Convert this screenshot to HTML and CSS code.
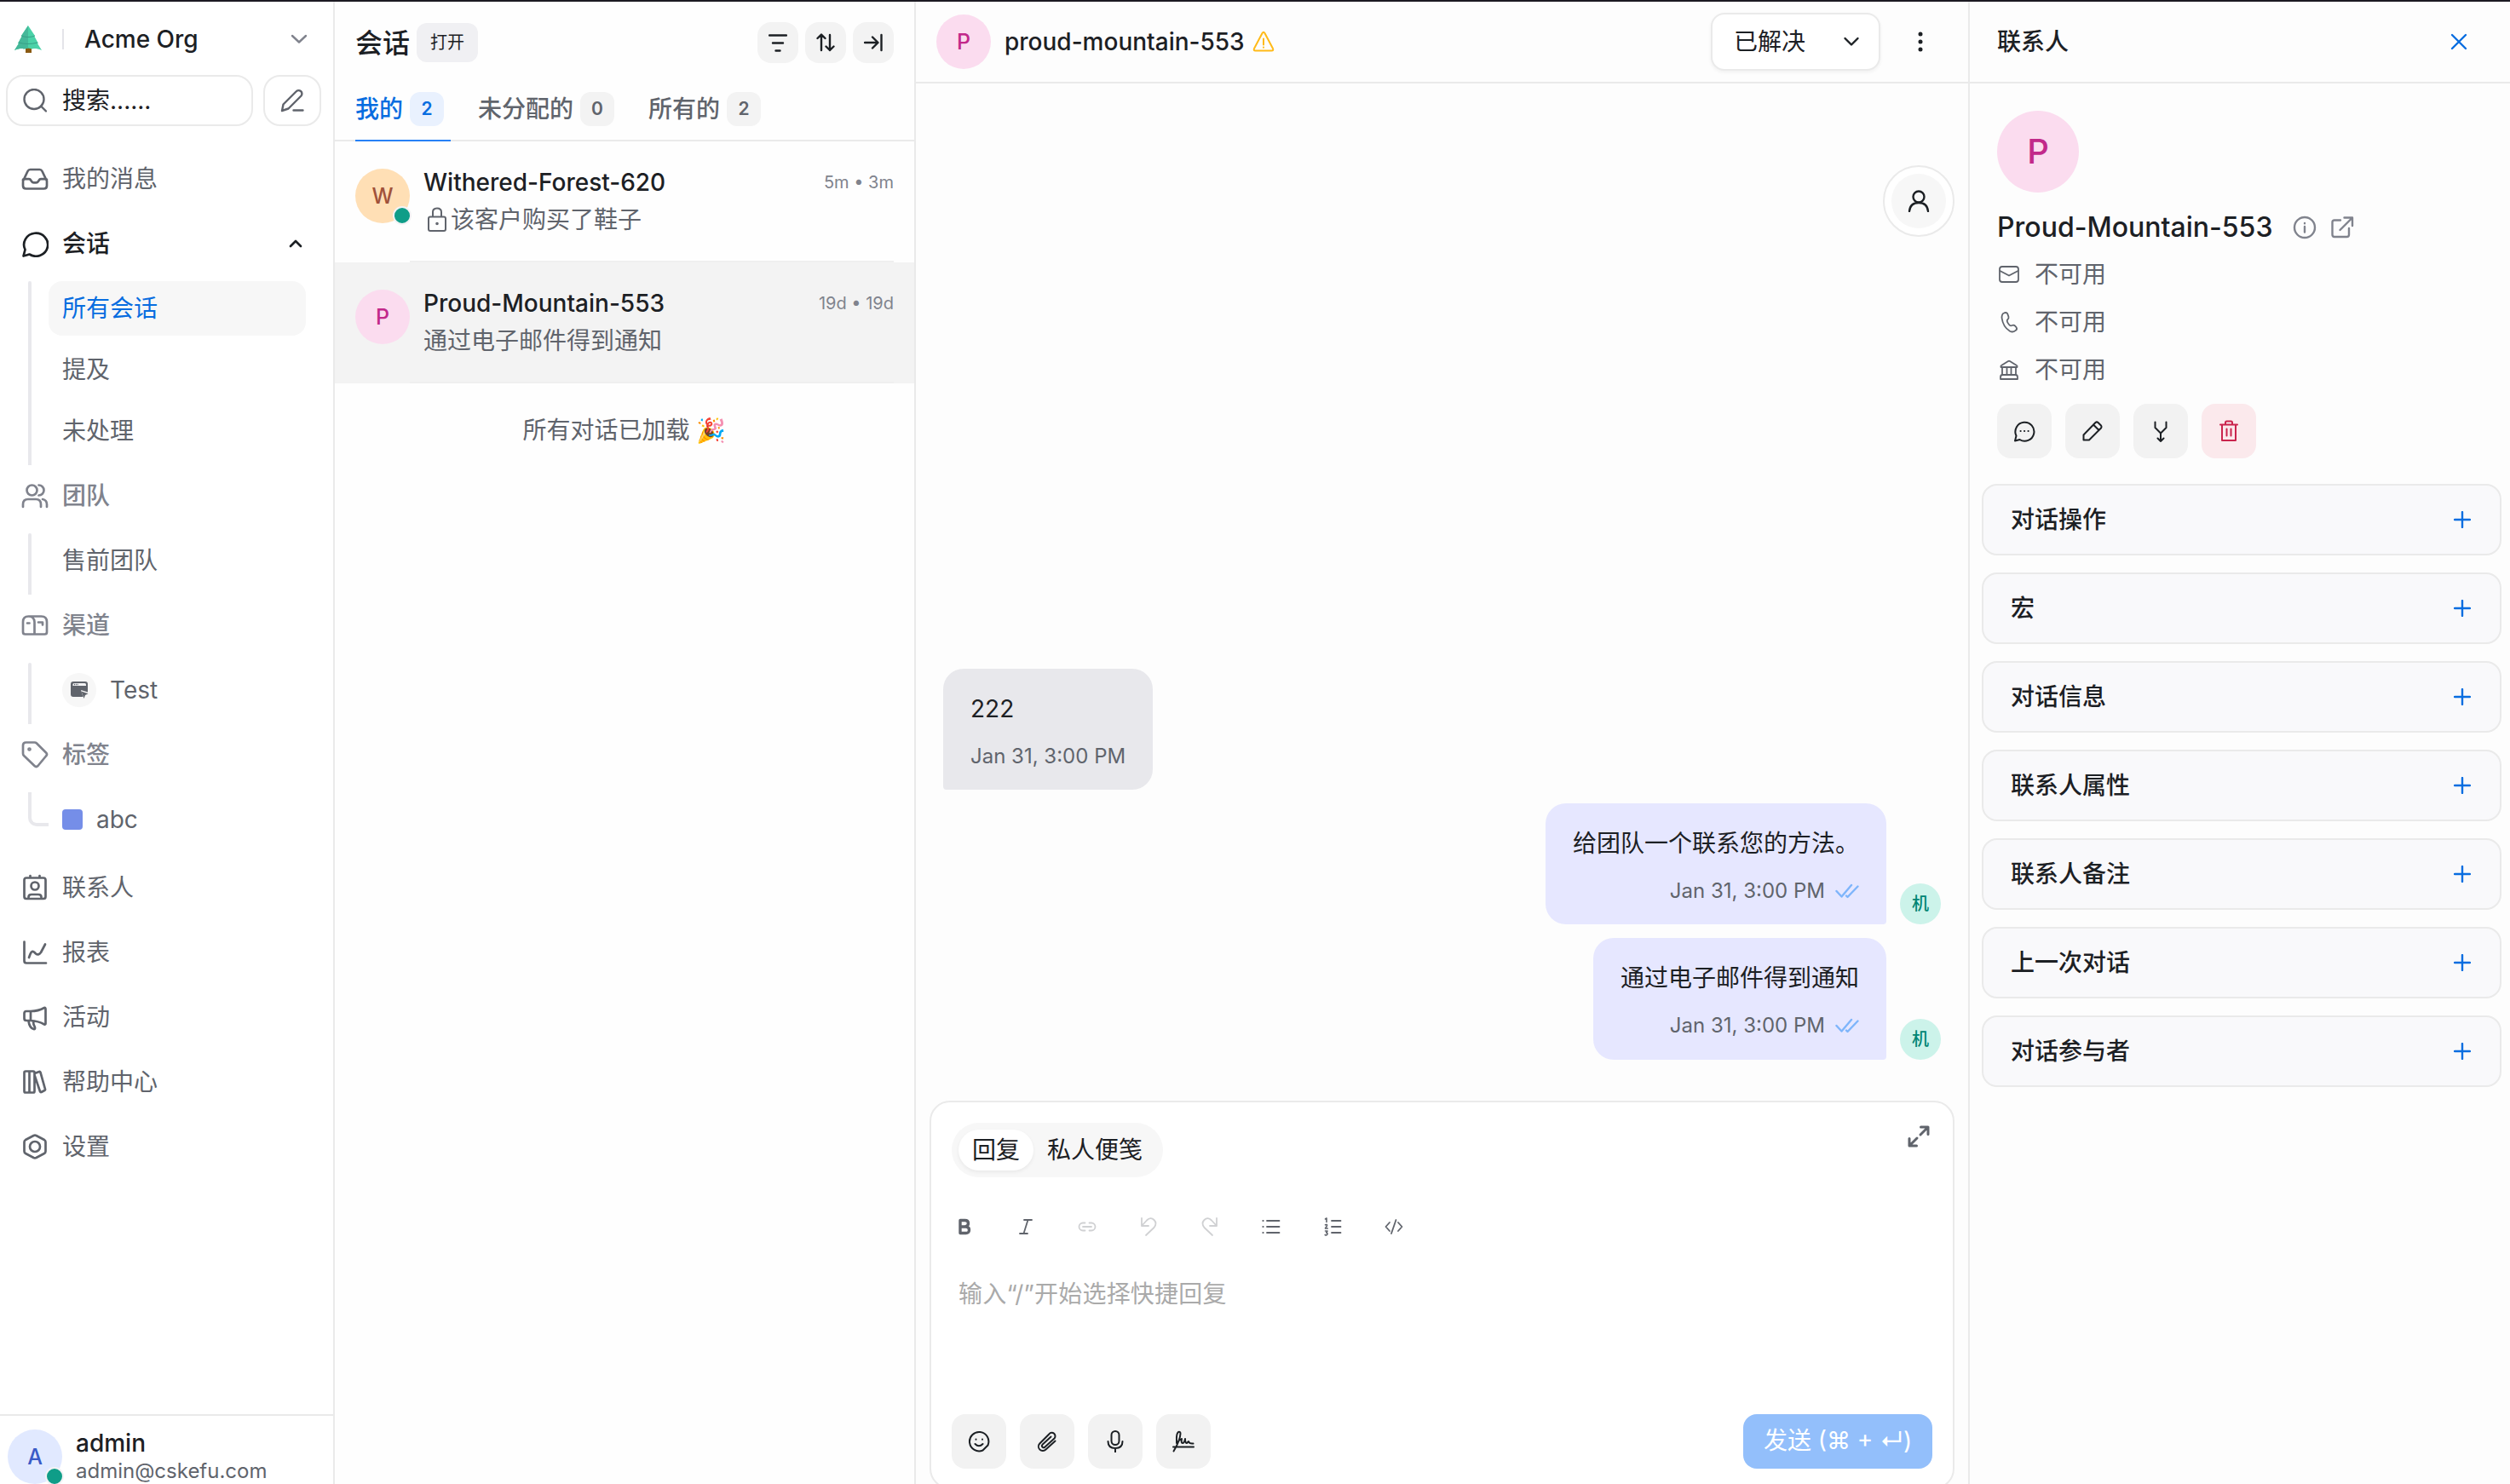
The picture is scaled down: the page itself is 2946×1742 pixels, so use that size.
FILE: index.html
```html
<!DOCTYPE html>
<html lang="zh-CN">
<head>
    <meta charset="UTF-8">
    <meta name="viewport" content="width=device-width, initial-scale=1.0">
    <title>会话 - Acme Org</title>
    <link rel="stylesheet" href="styles.css">
</head>
<body>
    <!-- shared icons -->
    <svg class="sprite">
        <symbol id="plus" viewBox="0 0 20 20"><path d="M10 1v18M1 10h18"/></symbol>
        <symbol id="checks" viewBox="0 0 28 18"><path d="M1.500 9l6 6.500L19 2M13 14.500l1.500 1.500L26.500 3.500"/></symbol>
    </svg>

    <div class="app">
        <!-- sidebar -->
        <aside class="sidebar">
            <div class="org">
                <svg class="logo" viewBox="0 0 32 32">
                    <path d="M13 26h7v6h-7z" fill="#8a5a12"/>
                    <path d="M16 0l8 12-1 0 5 9-1 0 5 8c-5-2-9-2.500-11-1.500l-5-1-5 1c-2-1-6-.5-11 1.500l5-8-1 0 5-9-1 0z" fill="#4bd2a8"/>
                    <path d="M16 0l-8 12 1 0-5 9 1 0-5 8c5-2 9-2.500 11-1.500l5-1z" fill="#45b899"/>
                    <path d="M8 12c5 2 11 2 16 0M5 20c7 2 15 2 22 0" fill="none" stroke="#37a187" stroke-width="1"/>
                </svg>
                <span class="org-line"></span>
                <span class="org-name">Acme Org</span>
                <svg class="icon org-arrow" width="20" height="12" viewBox="0 0 20 12"><path d="M2 2l8 7.500L18 2"/></svg>
            </div>
            <div class="search-row">
                <div class="search">
                    <svg class="icon" width="28" height="28" viewBox="0 0 28 28"><circle cx="13" cy="12.500" r="11.500"/><path d="M21 20.500l6 6"/></svg>
                    <span>搜索......</span>
                </div>
                <div class="compose">
                    <svg class="icon" width="28" height="28" viewBox="0 0 28 28"><path d="M2 26l1.500-7.500L18.500 3.500a3.800 3.800 0 0 1 6 5L9.500 23.500zM15.500 25.500h11"/></svg>
                </div>
            </div>

            <nav class="nav">
                <div class="nav-item">
                    <svg class="icon" width="32" height="32" viewBox="0 0 32 32"><path d="M2 18.500L7.500 7q1-2 3-2h11q2 0 3 2L30 18.500V24q0 3.500-3.500 3.500h-21Q2 27.500 2 24V17q0-.8 3-.8h4q1.500 0 2.300 1.500l.7 1q1 1.700 2.500 1.700h3q1.500 0 2.500-1.700l.7-1q.8-1.500 2.300-1.500h4q3 0 3 .8"/></svg>
                    <span>我的消息</span>
                </div>
                <div class="nav-item current">
                    <svg class="icon" width="32" height="32" viewBox="0 0 32 32"><path d="M2.500 30.500l2-7.500A14 13.500 0 1 1 9.500 28.500q-3 1-7 2z"/></svg>
                    <span>会话</span>
                    <svg class="icon nav-arrow" width="16" height="10" viewBox="0 0 16 10"><path d="M2 8l6-6 6 6"/></svg>
                </div>
                <div class="sub">
                    <div class="sub-item selected">所有会话</div>
                    <div class="sub-item">提及</div>
                    <div class="sub-item">未处理</div>
                </div>
                <div class="nav-item group">
                    <svg class="icon" width="32" height="32" viewBox="0 0 32 32"><circle cx="12.500" cy="9.500" r="6"/><path d="M2 29v-3q0-6 6-6h9q6 0 6 6v3M20.500 3.500a6 6 0 0 1 0 12M25 20q5 1 5 6v3"/></svg>
                    <span>团队</span>
                </div>
                <div class="sub">
                    <div class="sub-item">售前团队</div>
                </div>
                <div class="nav-item group">
                    <svg class="icon" width="32" height="32" viewBox="0 0 32 32"><path d="M8.500 5.500h15q6.500 0 6.500 6.500v12q0 2.500-2.500 2.500h-23Q2 26.500 2 24V12q0-6.500 6.500-6.500T15.500 12v14.500M7 13.500h2.500M20 12.500h5v3"/></svg>
                    <span>渠道</span>
                </div>
                <div class="sub">
                    <div class="sub-item">
                        <span class="channel-dot">
                            <svg width="22" height="22" viewBox="0 0 22 22"><path d="M4 1h14q3 0 3 3v9.500l-8-2.500 2.500 8H4q-3 0-3-3V4q0-3 3-3z" fill="#60646c"/><path d="M3.500 4.500q0-1.500 1.500-1.500h12.500q1.500 0 1.500 1.500V6H3.500z" fill="#f3f3f5"/><path d="M5 4.500h5" stroke="#60646c" stroke-width="1.500" stroke-dasharray="1.200 1"/><path d="M13.500 12.500l8 2.800-3.500 1.700-1.500 4z" fill="#60646c"/></svg>
                        </span>
                        Test
                    </div>
                </div>
                <div class="nav-item group">
                    <svg class="icon" width="32" height="32" viewBox="0 0 32 32"><path d="M2 5q0-3.500 3.500-3.500h10q1.500 0 2.500 1l11 11q2 2 0 4L19.500 29q-2 2-4 0L3 17q-1-1-1-2.500z"/><circle cx="9.500" cy="9.500" r="1"/></svg>
                    <span>标签</span>
                </div>
                <div class="sub last">
                    <div class="sub-item"><span class="label-square"></span>abc</div>
                </div>
                <div class="nav-item after-group">
                    <svg class="icon" width="32" height="32" viewBox="0 0 32 32"><path d="M6 4.500h20q2.500 0 2.500 2.500v19.500q0 2.500-2.500 2.500H6q-2.500 0-2.500-2.500V7q0-2.500 2.500-2.500zM10.500 2v2.500M21.500 2v2.500M8.500 29v-2q0-3 3.500-3h8q3.500 0 3.500 3v2"/><circle cx="16" cy="14" r="4.500"/></svg>
                    <span>联系人</span>
                </div>
                <div class="nav-item">
                    <svg class="icon" width="32" height="32" viewBox="0 0 32 32"><path d="M3.500 3.500V26q0 2.500 2.500 2.500h23M9 22l1.500-4q2-5 5-2l1.500 1.500q3 2.500 6-1.500l5-9.500"/></svg>
                    <span>报表</span>
                </div>
                <div class="nav-item">
                    <svg class="icon" width="32" height="32" viewBox="0 0 32 32"><path d="M11 9q9 0 16-4 1.500-.5 1.500 1.500v17q0 1.500-1.500 1Q20 20.500 11 20H6q-2.500 0-2.500-2.500v-6Q3.500 9 6 9zM11 9v11M8.500 20.500q1 8 6 9.500 2 .3 1.500-2-2-3-2-7.500"/></svg>
                    <span>活动</span>
                </div>
                <div class="nav-item">
                    <svg class="icon" width="32" height="32" viewBox="0 0 32 32"><path d="M5 3.500h9q1.500 0 1.500 1.500v22q0 1.500-1.500 1.500H5q-1.500 0-1.500-1.500V5q0-1.500 1.500-1.500zM9.500 3.500v25M17 5.500l4-1.500q1-.3 1.500.8L28 24.500q.3 1-.7 1.500L23.500 28q-1 .3-1.500-.8L15.500 8"/></svg>
                    <span>帮助中心</span>
                </div>
                <div class="nav-item">
                    <svg class="icon" width="32" height="32" viewBox="0 0 32 32"><path d="M14.500 3q1.500-.7 3 0l9.500 5q1.500 1 1.500 2.500v11q0 1.500-1.500 2.500l-9.500 5q-1.500.7-3 0L5 24q-1.500-1-1.500-2.500v-11Q3.500 9 5 8z"/><circle cx="16" cy="16" r="6"/></svg>
                    <span>设置</span>
                </div>
            </nav>

            <div class="profile">
                <div class="avatar blue">A<span class="status"></span></div>
                <div class="profile-text">
                    <div class="profile-name">admin</div>
                    <div class="profile-mail">admin@cskefu.com</div>
                </div>
            </div>
        </aside>

        <!-- conversation list -->
        <section class="list">
            <div class="list-head">
                <h1>会话</h1>
                <span class="open-tag">打开</span>
                <div class="list-tools">
                    <span class="tool"><svg class="icon" width="22" height="22" viewBox="0 0 22 22"><path d="M1 2.500h20M5 11.500h12M8.500 20.500h5"/></svg></span>
                    <span class="tool"><svg class="icon" width="22" height="22" viewBox="0 0 22 22"><path d="M1.500 6L6 1.500 10.500 6M6 2v18M11.500 15.500L16 20l4.500-4.500M16 20V2"/></svg></span>
                    <span class="tool"><svg class="icon" width="22" height="22" viewBox="0 0 22 22"><path d="M1 11h15M10 4.500l6.500 6.500-6.500 6.500M20.500 2v18"/></svg></span>
                </div>
            </div>
            <div class="tabs">
                <div class="tab active">我的<span class="count">2</span></div>
                <div class="tab">未分配的<span class="count">0</span></div>
                <div class="tab">所有的<span class="count">2</span></div>
            </div>
            <div class="conv">
                <div class="avatar orange">W<span class="status"></span></div>
                <div class="conv-body">
                    <div class="conv-top"><span class="conv-name">Withered-Forest-620</span><span class="conv-time">5m • 3m</span></div>
                    <div class="conv-text"><svg class="icon lock" width="24" height="30" viewBox="0 0 24 30"><path d="M4 11.500h16q2 0 2 2V26q0 2-2 2H4q-2 0-2-2V13.500q0-2 2-2zM7 11.500V6q0-4.500 5-4.500T17 6v5.500"/><circle cx="12" cy="19.500" r=".8"/></svg>该客户购买了鞋子</div>
                </div>
            </div>
            <div class="conv picked">
                <div class="avatar pink">P</div>
                <div class="conv-body">
                    <div class="conv-top"><span class="conv-name">Proud-Mountain-553</span><span class="conv-time">19d • 19d</span></div>
                    <div class="conv-text">通过电子邮件得到通知</div>
                </div>
            </div>
            <div class="list-end">所有对话已加载 🎉</div>
        </section>

        <!-- chat -->
        <main class="chat">
            <header class="chat-head">
                <div class="avatar pink">P</div>
                <span class="chat-name">proud-mountain-553</span>
                <svg class="icon warn" width="26" height="26" viewBox="0 0 26 26"><path d="M11.500 3q1.500-2.500 3 0l9.500 18q1 2.500-1.500 2.500h-19Q1 23.500 2 21zM13 9.500v7M13 19.500v.3"/></svg>
                <div class="resolve">已解决<svg class="icon" width="20" height="12" viewBox="0 0 20 12"><path d="M2.500 2l7.500 7.500L17.500 2"/></svg></div>
                <svg class="more" width="6" height="24" viewBox="0 0 6 24"><circle cx="3" cy="3" r="2.500"/><circle cx="3" cy="12" r="2.500"/><circle cx="3" cy="21" r="2.500"/></svg>
            </header>

            <div class="messages">
                <div class="float-btn"><span><svg class="icon" width="26" height="26" viewBox="0 0 26 26"><circle cx="13" cy="8" r="6.500"/><path d="M2 25q1-10 11-10t11 10"/></svg></span></div>
                <div class="bubble in">
                    <p>222</p>
                    <div class="meta">Jan 31, 3:00 PM</div>
                </div>
                <div class="out-row">
                    <div class="bubble out">
                        <p>给团队一个联系您的方法。</p>
                        <div class="meta">Jan 31, 3:00 PM<svg class="icon checks" width="28" height="18"><use href="#checks"/></svg></div>
                    </div>
                    <div class="bot">机</div>
                </div>
                <div class="out-row">
                    <div class="bubble out">
                        <p>通过电子邮件得到通知</p>
                        <div class="meta">Jan 31, 3:00 PM<svg class="icon checks" width="28" height="18"><use href="#checks"/></svg></div>
                    </div>
                    <div class="bot">机</div>
                </div>
            </div>

            <div class="editor">
                <div class="editor-top">
                    <div class="switch"><span class="on">回复</span><span>私人便笺</span></div>
                    <svg class="icon expand" width="26" height="26" viewBox="0 0 26 26"><path d="M15.500 2h8.500v8.500M23 3l-8 8M2 15.500V24h8.500M3 23l8-8"/></svg>
                </div>
                <div class="format">
                    <svg class="icon bold" viewBox="0 0 24 24"><path d="M7 4.500h5.500q4 0 4 3.500T12.500 12H7zM7 12h6.500q4 0 4 3.800t-4 3.700H7z"/></svg>
                    <svg class="icon" viewBox="0 0 24 24"><path d="M10 4h9M5 20h9M14.500 4l-5 16"/></svg>
                    <svg class="icon off" viewBox="0 0 24 24"><path d="M9.500 7.500H7A4.500 4.500 0 0 0 7 16.500h2.500M14.500 7.500H17a4.500 4.500 0 0 1 0 9h-2.500M7 12h10"/></svg>
                    <svg class="icon off" viewBox="0 0 24 24"><path d="M4 2v9h8M4 11l6-6.500q4.500-4.500 8.500-.5t0 9L9 22"/></svg>
                    <svg class="icon off" viewBox="0 0 24 24"><path d="M20 2v9h-8M20 11l-6-6.500q-4.500-4.500-8.500-.5t0 9L15 22"/></svg>
                    <svg class="icon" viewBox="0 0 24 24"><path d="M7 5h14.500M7 12h14.500M7 19h14.500M2.300 5h.4M2.300 12h.4M2.300 19h.4"/></svg>
                    <svg class="icon" viewBox="0 0 24 24"><path d="M11 5h10.500M11 12h10.500M11 19h10.500"/><path class="thin" d="M3.500 3L5 2V6.500M3.500 9.800q2.500-1 2 1L3.500 14h2.800M3.500 17h2.500L4.700 19q2.300.5.800 2.500-1 .8-2.300 0"/></svg>
                    <svg class="icon" viewBox="0 0 24 24"><path d="M7 7L2.500 12 7 17M17 7l4.500 5L17 17M14.500 4l-5.500 16"/></svg>
                </div>
                <div class="placeholder">输入“/”开始选择快捷回复</div>
                <div class="editor-bottom">
                    <span class="sq"><svg class="icon" width="26" height="26" viewBox="0 0 26 26"><path d="M17.500 23.500A11.200 11.200 0 1 1 23.500 17.500zM8.500 16q4.500 4.500 9 0M9.500 10.500v.2M17 10.500v.2"/></svg></span>
                    <span class="sq"><svg class="icon" width="26" height="26" viewBox="0 0 26 26"><path d="M22.500 12.500L11.500 22.500A4.900 4.900 0 0 1 4.300 15.500L15.500 4.200A3.800 3.800 0 0 1 21.500 9.500L10.500 19.500a1.900 1.900 0 0 1-3-2.700L17.500 7.500"/></svg></span>
                    <span class="sq"><svg class="icon" width="26" height="26" viewBox="0 0 26 26"><rect x="8.500" y="1" width="9" height="16" rx="4.500"/><path d="M4.500 13q0 8 8.500 8t8.500-8M13 21v4.500"/></svg></span>
                    <span class="sq"><svg class="icon" width="26" height="26" viewBox="0 0 26 26"><path d="M1.500 24.500Q9 12 9.500 4 9.500 1 7 2 4.500 4 5 12v3q3-4 6-5-1 5 1 5t3-5q0 5 2 5l2-2q1 3 5.500 2.500M1 19.500h24"/></svg></span>
                    <div class="send">发送 (⌘ + ↵)</div>
                </div>
            </div>
        </main>

        <!-- contact panel -->
        <aside class="contact">
            <header class="contact-head">
                <span>联系人</span>
                <svg class="icon" width="20" height="20" viewBox="0 0 20 20"><path d="M2 2l16 16M18 2L2 18"/></svg>
            </header>
            <div class="contact-info">
                <div class="avatar pink big">P</div>
                <div class="contact-name">Proud-Mountain-553
                    <svg class="icon" width="28" height="28" viewBox="0 0 28 28"><circle cx="14" cy="14" r="12"/><path d="M14 13v6.500M14 9v.2"/></svg>
                    <svg class="icon" width="28" height="28" viewBox="0 0 28 28"><path d="M12 5.500H5q-2.500 0-2.500 2.500v14.500Q2.500 25 5 25h14.500q2.500 0 2.500-2.500V15M16.500 2.500H26V12M25 3.500L11.500 17"/></svg>
                </div>
                <div class="field"><svg class="icon" width="28" height="28" viewBox="0 0 28 28"><rect x="3" y="5" width="22" height="18" rx="3"/><path d="M3.500 10L14 15.500 24.500 10"/></svg>不可用</div>
                <div class="field"><svg class="icon" width="28" height="28" viewBox="0 0 28 28"><path d="M8 3.500q3.500-1.500 4.500 1.500l1 3q.5 2-1.500 3.500-1 2 2 5.500 1.500 2 3.500 1 2-1 3.500.5l1.500 1.700q1.500 2-.5 3.500-3 3-7 1Q7 20 5.500 9 5.500 4.500 8 3.500z"/></svg>不可用</div>
                <div class="field"><svg class="icon" width="28" height="28" viewBox="0 0 28 28"><path d="M4.500 11q-.5-1.500.5-2l8-5q1-.5 2 0l8 5q1 .5.5 2zM6 11v9M11.500 11v9M16.500 11v9M22 11v9M4 25v-2.500Q4 20 6.500 20h15q2.500 0 2.500 2.500V25z"/></svg>不可用</div>
                <div class="actions">
                    <span class="sq"><svg class="icon" width="26" height="26" viewBox="0 0 26 26"><path d="M2 24.500l1.500-6A11 11 0 1 1 7.500 23q-2.500.8-5.500 1.500zM8.500 13h.2M13 13h.2M17.500 13h.2"/></svg></span>
                    <span class="sq"><svg class="icon" width="26" height="26" viewBox="0 0 26 26"><path d="M2.500 23.500v-6L16.500 3q1.500-1.300 3 0l3.500 3.500q1 1.500 0 3L9 23.500zM14 5.500l6.500 6.500"/></svg></span>
                    <span class="sq"><svg class="icon" width="26" height="26" viewBox="0 0 26 26"><path d="M6.500 2.500V9l6.500 6.500L19.500 9V2.500M13 15.500V25M9.500 21.500L13 25l3.500-3.500"/></svg></span>
                    <span class="sq del"><svg class="icon" width="26" height="26" viewBox="0 0 26 26"><path d="M3 5.500h20M5 5.500V24h16V5.500M9 5V3q0-1.500 1.500-1.500h5Q17 1.500 17 3v2M10.500 10.500v8M15.500 10.500v8"/></svg></span>
                </div>
            </div>
            <div class="panels">
                <div class="panel">对话操作<svg class="icon" width="20" height="20"><use href="#plus"/></svg></div>
                <div class="panel">宏<svg class="icon" width="20" height="20"><use href="#plus"/></svg></div>
                <div class="panel">对话信息<svg class="icon" width="20" height="20"><use href="#plus"/></svg></div>
                <div class="panel">联系人属性<svg class="icon" width="20" height="20"><use href="#plus"/></svg></div>
                <div class="panel">联系人备注<svg class="icon" width="20" height="20"><use href="#plus"/></svg></div>
                <div class="panel">上一次对话<svg class="icon" width="20" height="20"><use href="#plus"/></svg></div>
                <div class="panel">对话参与者<svg class="icon" width="20" height="20"><use href="#plus"/></svg></div>
            </div>
        </aside>
    </div>
</body>
</html>
```

FILE: styles.css
```css
* {
    box-sizing: border-box;
}

body {
    margin: 0;
    font-family: Inter, "Noto Sans CJK SC", sans-serif;
    font-size: 28px;
    line-height: 40px;
    color: #1c2024;
    background: #fdfdfd;
    overflow: hidden;
}

h1, p {
    margin: 0;
}

.sprite {
    display: none;
}

.app {
    display: flex;
    height: 1742px;
    border-top: 2px solid #1c1a22;
    overflow: hidden;
}

.icon {
    fill: none;
    stroke: currentColor;
    stroke-width: 2.4;
    stroke-linecap: round;
    stroke-linejoin: round;
    flex-shrink: 0;
}

.avatar {
    position: relative;
    display: flex;
    align-items: center;
    justify-content: center;
    flex-shrink: 0;
    width: 64px;
    height: 64px;
    border-radius: 50%;
    font-size: 25px;
    font-weight: 500;
}

.avatar.pink { background: #fbdcef; color: #c2298a; }
.avatar.orange { background: #ffdfb5; color: #a1523a; }
.avatar.blue { background: #e1e9ff; color: #3a5bc7; }

.avatar.big {
    width: 96px;
    height: 96px;
    font-size: 40px;
}

.status {
    position: absolute;
    right: -2px;
    bottom: -2px;
    width: 22px;
    height: 22px;
    border-radius: 50%;
    border: 2px solid #f3f3f5;
    background: #0f9d88;
}

/* ---------- sidebar ---------- */
.sidebar {
    display: flex;
    flex-direction: column;
    flex-shrink: 0;
    width: 393px;
    border-right: 2px solid #eaeaea;
    background: #fff;
    color: #60646c;
}

.org {
    display: flex;
    align-items: center;
    height: 86px;
    padding: 2px 30px 0 17px;
    color: #80838d;
}

.logo {
    width: 32px;
    height: 32px;
}

.org-line {
    width: 2px;
    height: 24px;
    margin: 0 24px;
    background: #e4e4e9;
}

.org-name {
    color: #1c2024;
    font-weight: 500;
}

.org-arrow {
    margin-left: auto;
}

.search-row {
    display: flex;
    gap: 12px;
    padding: 0 14px 0 7px;
}

.search, .compose {
    display: flex;
    align-items: center;
    height: 60px;
    border: 2px solid #eaeaea;
    border-radius: 20px;
}

.search {
    flex: 1;
    gap: 18px;
    padding-left: 18px;
}

.search span {
    color: #1c2024;
}

.compose {
    width: 68px;
    justify-content: center;
}

.nav {
    flex: 1;
    padding-top: 18px;
}

.nav-item {
    display: flex;
    align-items: center;
    gap: 16px;
    height: 64px;
    margin: 12px 32px 12px 25px;
}

.nav-item .icon {
    stroke-width: 2.7;
}

.nav-item.current {
    color: #1c2024;
    font-weight: 500;
}

.nav-item .nav-arrow {
    margin-left: auto;
    margin-right: 4px;
}

.nav-item.group {
    margin-top: 4px;
    color: #80838d;
    font-weight: 500;
}

.nav-item.after-group {
    margin-top: 8px;
}

.sub {
    position: relative;
    margin-left: 57px;
}

.sub::before {
    content: "";
    position: absolute;
    left: -24px;
    top: 0;
    width: 4px;
    height: 100%;
    border-radius: 2px 2px 0 0;
    background: #e8e8ec;
}

.sub.last::before {
    width: 20px;
    height: 36px;
    background: none;
    border: solid #e8e8ec;
    border-width: 0 0 4px 4px;
    border-radius: 0 0 0 10px;
}

.sub-item {
    display: flex;
    align-items: center;
    width: 302px;
    height: 64px;
    margin-bottom: 8px;
    padding-left: 16px;
    border-radius: 16px;
}

.sub::after {
    content: "";
    display: table;
}

.sub-item.selected {
    background: #f7f7f7;
    color: #086de0;
}

.channel-dot {
    display: flex;
    align-items: center;
    justify-content: center;
    width: 40px;
    height: 40px;
    margin-right: 16px;
    border-radius: 50%;
    background: #f7f7f7;
}

.label-square {
    width: 24px;
    height: 24px;
    margin-right: 16px;
    border-radius: 4px;
    background: #758ee8;
}

.profile {
    display: flex;
    gap: 16px;
    height: 82px;
    padding: 16px 0 0 9px;
    border-top: 2px solid #eaeaea;
}

.profile-name {
    height: 33px;
    line-height: 32px;
    color: #1c2024;
    font-weight: 500;
}

.profile-mail {
    font-size: 24px;
    line-height: 32px;
}

/* ---------- conversation list ---------- */
.list {
    flex-shrink: 0;
    width: 682px;
    border-right: 2px solid #eaeaea;
    background: #fefefe;
}

.list-head {
    display: flex;
    align-items: center;
    height: 96px;
    padding: 0 24px;
}

.list-head h1 {
    padding-top: 1px;
    font-size: 32px;
    font-weight: 500;
}

.open-tag {
    margin-left: 8px;
    padding: 0 16px;
    border-radius: 12px;
    background: #f0f0f3;
    font-size: 20px;
    line-height: 46px;
}

.list-tools {
    display: flex;
    gap: 8px;
    margin-left: auto;
}

.tool {
    display: flex;
    align-items: center;
    justify-content: center;
    width: 48px;
    height: 48px;
    border-radius: 16px;
    background: #f3f3f3;
}

.tabs {
    display: flex;
    gap: 32px;
    height: 68px;
    padding: 0 24px;
    border-bottom: 2px solid #eaeaea;
    color: #60646c;
    font-weight: 500;
}

.tab {
    display: flex;
    gap: 8px;
    height: 68px;
    padding: 10px 8px 0 0;
    border-bottom: 2px solid transparent;
}

.tab.active {
    border-color: #2781f6;
    color: #086de0;
}

.tab .count {
    width: 40px;
    height: 40px;
    border-radius: 12px;
    background: #f3f3f3;
    font-size: 21px;
    font-weight: 600;
    text-align: center;
}

.tab.active .count {
    background: #e9f1fe;
}

.conv {
    display: flex;
    height: 142px;
    padding-left: 24px;
}

.conv .avatar {
    margin-top: 32px;
}

.conv.picked {
    background: #f3f3f3;
}

.conv-body {
    width: 568px;
    padding: 28px 0 0 16px;
    border-bottom: 2px solid #efefef;
}

.conv-top {
    display: flex;
    justify-content: space-between;
}

.conv-name {
    font-weight: 500;
}

.conv-time {
    color: #80838d;
    font-size: 20px;
}

.conv-text {
    display: flex;
    align-items: center;
    height: 44px;
    margin-top: 2px;
    color: #60646c;
}

.lock {
    margin: 0 4px 0 4px;
    stroke-width: 2;
}

.list-end {
    margin-top: 35px;
    text-align: center;
    color: #60646c;
}

/* ---------- chat ---------- */
.chat {
    display: flex;
    flex-direction: column;
    flex: 1;
    min-width: 0;
}

.chat-head {
    display: flex;
    align-items: center;
    flex-shrink: 0;
    height: 96px;
    padding: 0 53px 0 24px;
    border-bottom: 2px solid #eaeaea;
}

.chat-name {
    margin-left: 16px;
    font-weight: 500;
}

.warn {
    margin-left: 9px;
    color: #ffba18;
    stroke-width: 2;
}

.resolve {
    display: flex;
    align-items: center;
    justify-content: space-between;
    width: 199px;
    height: 68px;
    margin-left: auto;
    padding: 0 22px 0 25px;
    border: 2px solid #eaeaea;
    border-radius: 16px;
    background: #fff;
    box-shadow: 0 2px 4px rgba(0, 0, 0, 0.05);
}

.more {
    margin-left: 44px;
    fill: #1c2024;
}

.messages {
    position: relative;
    display: flex;
    flex-direction: column;
    justify-content: flex-end;
    flex: 1;
    gap: 16px;
    padding: 0 32px 48px;
}

.float-btn {
    position: absolute;
    right: 16px;
    top: 96px;
    padding: 8px;
    border: 2px solid #eaeaea;
    border-radius: 50%;
    background: #fff;
}

.float-btn span {
    display: flex;
    align-items: center;
    justify-content: center;
    width: 64px;
    height: 64px;
    border-radius: 50%;
    background: #f7f7f7;
}

.bubble {
    height: 142px;
    padding: 25px 32px 0;
    border-radius: 24px;
}

.bubble p {
    line-height: 44px;
}

.bubble.in {
    align-self: flex-start;
    background: #e8e8ec;
    border-bottom-left-radius: 4px;
}

.bubble.out {
    background: #e6e7ff;
    border-bottom-right-radius: 4px;
}

.meta {
    display: flex;
    align-items: center;
    justify-content: flex-end;
    margin-top: 16px;
    color: #60646c;
    font-size: 24px;
    line-height: 36px;
}

.checks {
    margin-left: 12px;
    color: #7eb5fb;
}

.out-row {
    display: flex;
    align-items: flex-end;
    justify-content: flex-end;
    gap: 16px;
}

.out-row:last-child .bubble {
    height: 143px;
}

.bot {
    width: 48px;
    height: 48px;
    border-radius: 50%;
    background: #ccf3ea;
    color: #008573;
    font-size: 20px;
    font-weight: 500;
    line-height: 48px;
    text-align: center;
}

.editor {
    flex-shrink: 0;
    height: 456px;
    margin: 0 16px -6px;
    padding: 24px;
    border: 2px solid #eaeaea;
    border-radius: 24px;
    background: #fff;
}

.editor-top {
    display: flex;
    justify-content: space-between;
}

.switch {
    display: flex;
    height: 64px;
    padding: 8px;
    border-radius: 32px;
    background: #f7f7f7;
    line-height: 48px;
}

.switch span {
    padding: 0 16px;
}

.switch .on {
    border-radius: 24px;
    background: #fff;
    box-shadow: 0 2px 4px rgba(0, 0, 0, 0.06);
}

.expand {
    margin: 3px 3px 0 0;
    color: #60646c;
    stroke-width: 3;
}

.format {
    display: flex;
    gap: 48px;
    margin: 46px 0 0 3px;
    color: #60646c;
}

.format .icon {
    width: 24px;
    height: 24px;
    stroke-width: 1.8;
}

.format .bold {
    stroke-width: 3.4;
}

.format .thin {
    stroke-width: 1.6;
}

.format .off {
    color: #d0d1d3;
}

.placeholder {
    height: 152px;
    margin: 47px 0 0 8px;
    color: #aaa;
    letter-spacing: 0.2px;
}

.editor-bottom {
    display: flex;
    gap: 16px;
    margin-top: 9px;
}

.sq {
    display: flex;
    align-items: center;
    justify-content: center;
    width: 64px;
    height: 64px;
    border-radius: 16px;
    background: #f2f2f2;
}

.sq .icon {
    stroke-width: 2;
}

.send {
    width: 222px;
    margin-left: auto;
    border-radius: 16px;
    background: #93bffb;
    color: #fff;
    line-height: 63px;
    text-align: center;
    white-space: nowrap;
}

/* ---------- contact panel ---------- */
.contact {
    flex-shrink: 0;
    width: 636px;
    border-left: 2px solid #eaeaea;
}

.contact-head {
    display: flex;
    align-items: center;
    justify-content: space-between;
    height: 96px;
    padding: 0 50px 0 32px;
    border-bottom: 2px solid #eaeaea;
    font-weight: 500;
}

.contact-head .icon {
    color: #086de0;
}

.contact-info {
    padding: 32px 32px 0;
}

.contact-name {
    display: flex;
    align-items: center;
    margin: 21px 0 7px;
    font-size: 32px;
    font-weight: 500;
    color: #1c2024;
}

.contact-name .icon {
    margin-left: 16px;
    color: #80838d;
}

.contact-name .icon:first-of-type {
    margin-left: 24px;
}

.field {
    display: flex;
    align-items: center;
    gap: 16px;
    height: 56px;
    color: #60646c;
}

.field .icon {
    stroke-width: 1.8;
}

.actions {
    display: flex;
    gap: 16px;
    margin-top: 12px;
}

.sq.del {
    background: #fbe9ec;
    color: #ca244d;
}

.panels {
    display: flex;
    flex-direction: column;
    gap: 20px;
    padding: 30px 10px 0 14px;
}

.panel {
    display: flex;
    align-items: center;
    justify-content: space-between;
    height: 84px;
    padding: 0 34px 0 32px;
    border: 2px solid #eaeaea;
    border-radius: 18px;
    background: #f9f9fb;
    font-weight: 500;
}

.panel .icon {
    color: #086de0;
}
```
